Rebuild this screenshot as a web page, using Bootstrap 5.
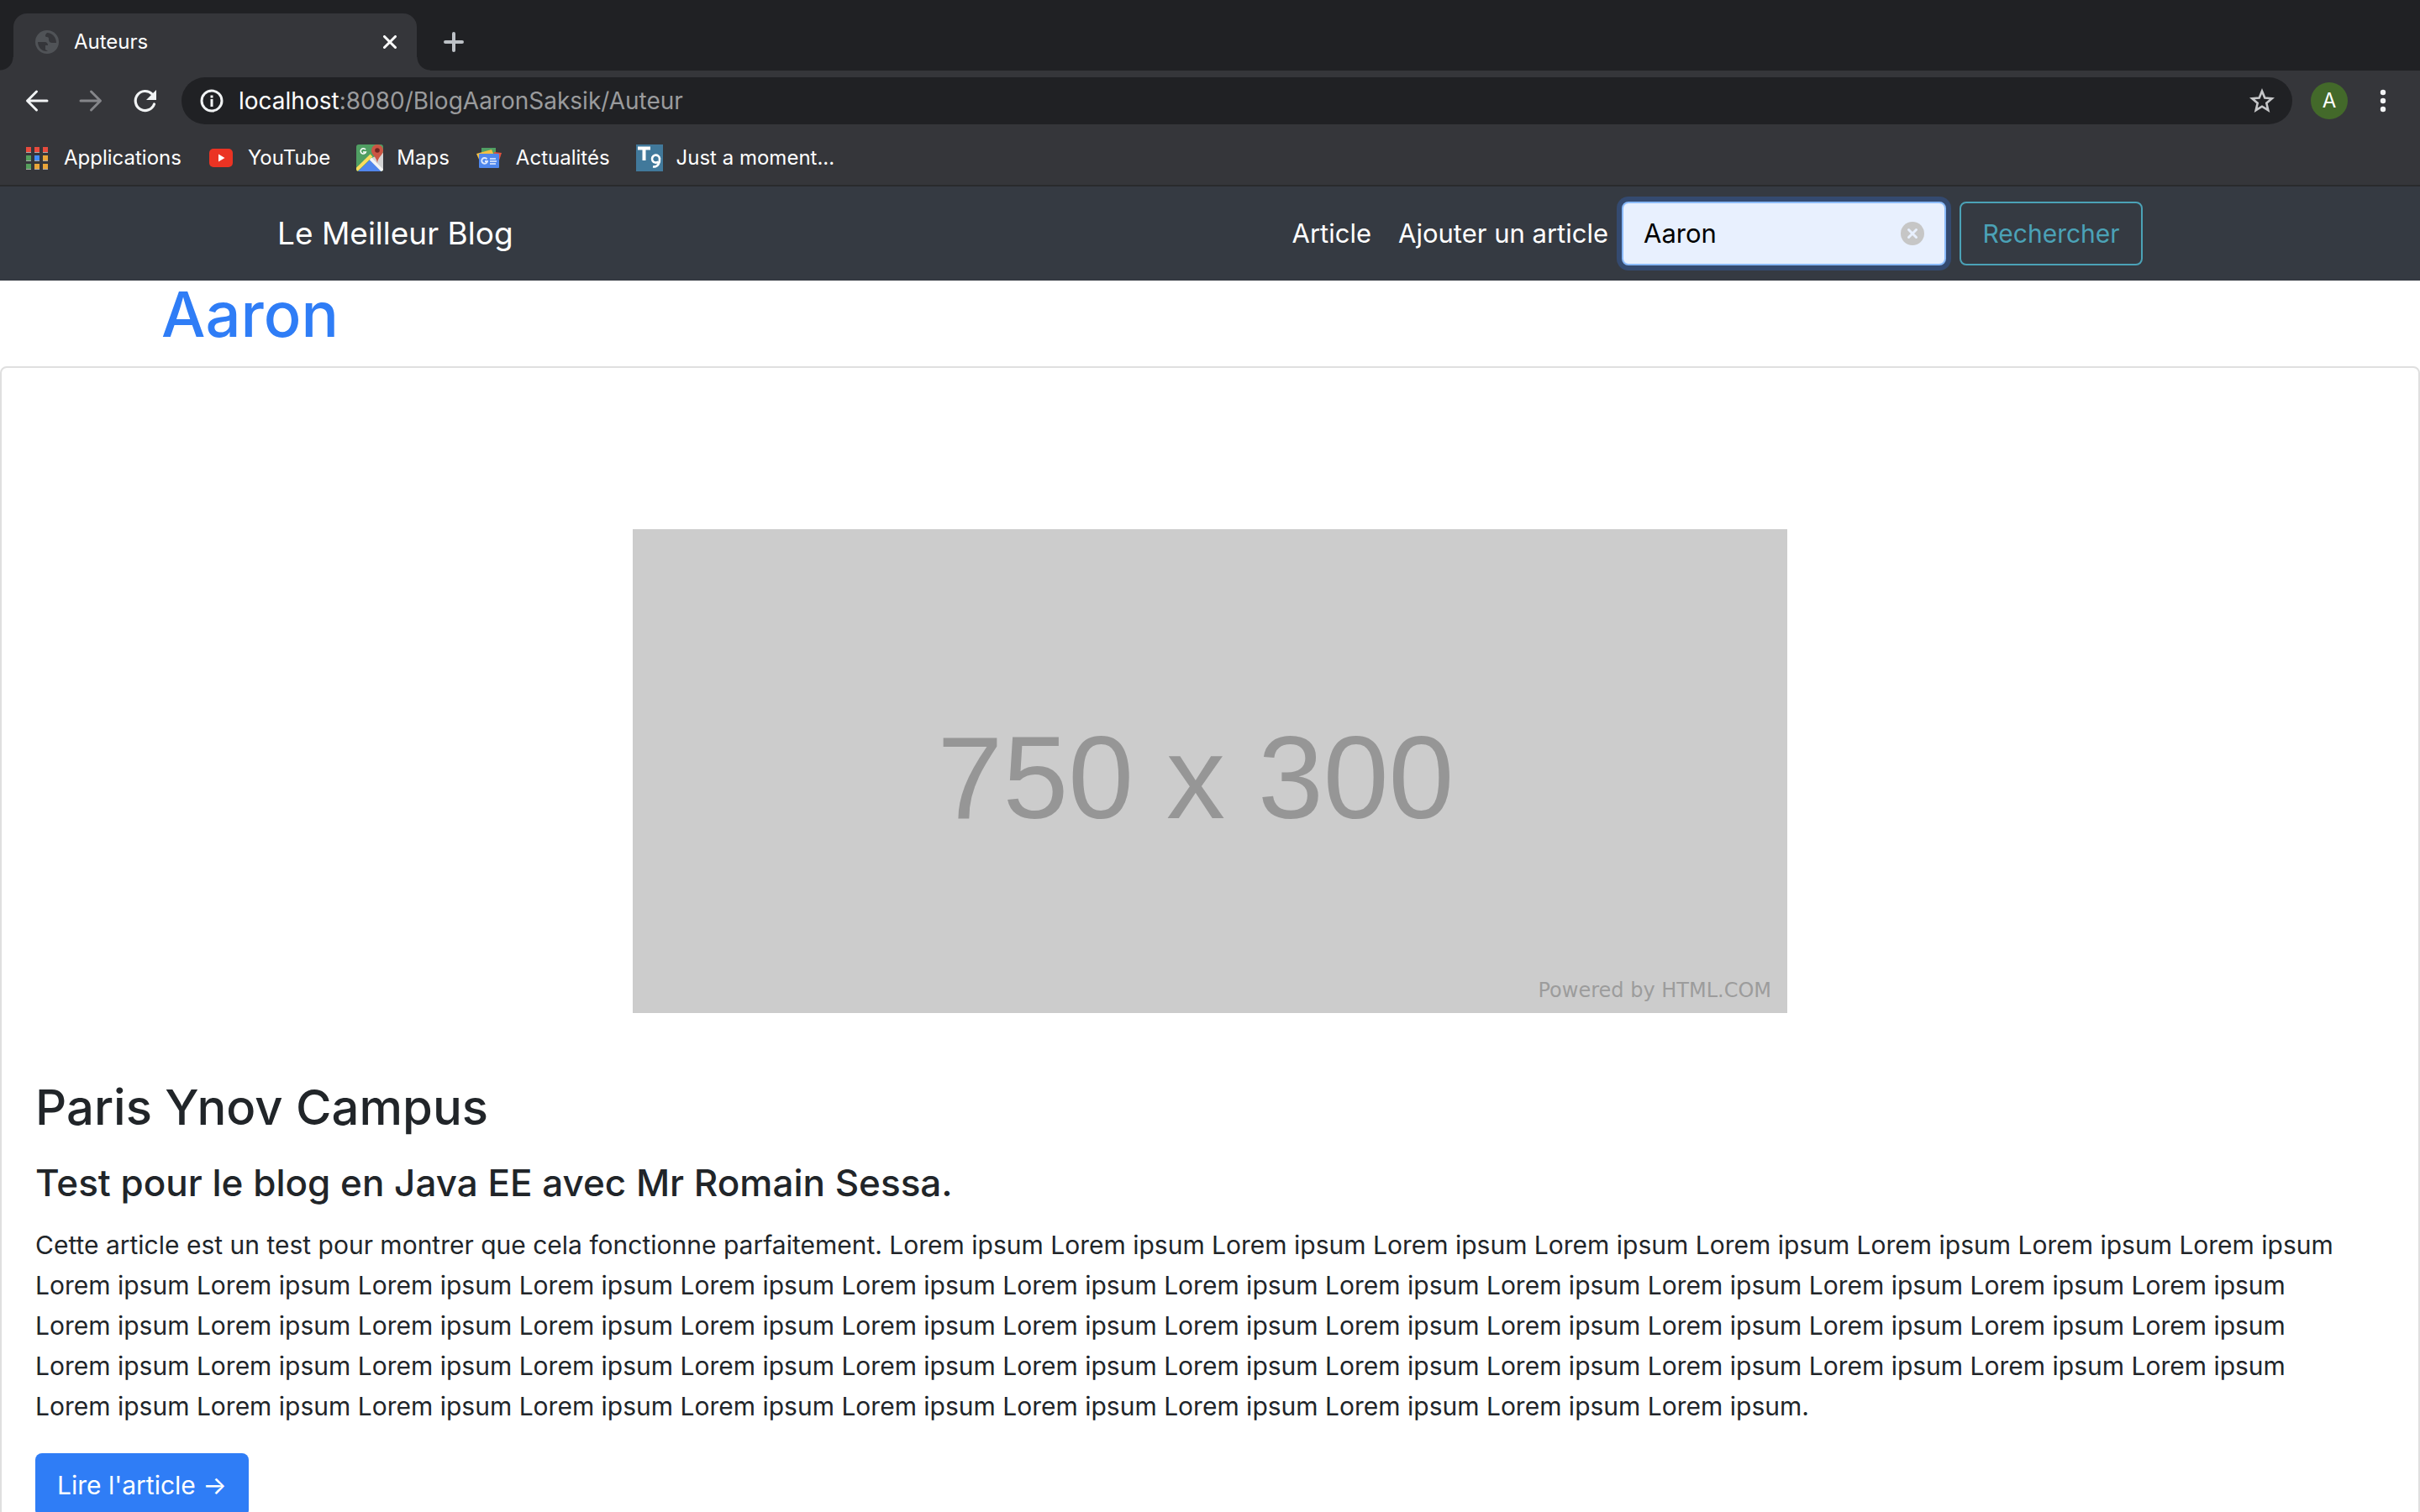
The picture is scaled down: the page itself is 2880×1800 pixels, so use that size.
<!DOCTYPE html>
<html lang="fr">
<head>
<meta charset="utf-8">
<meta name="viewport" content="width=device-width, initial-scale=1">
<title>Auteurs</title>
<link href="https://cdn.jsdelivr.net/npm/bootstrap@5.3.0/dist/css/bootstrap.min.css" rel="stylesheet">
<style>
  body { font-family: Inter, "Liberation Sans", sans-serif; font-size: 30px; line-height: 48px; color: #212529; overflow: hidden; }
  svg { display: block; flex: none; }
  button { color: inherit; }

  /* browser window */
  .tab-strip { background: #202124; height: 84px; padding-top: 16px; font-size: 24px; line-height: 32px; }
  .tab-foot { width: 16px; height: 16px; background: radial-gradient(circle at 0 0, transparent 15px, #35363a 16px); }
  .tab-foot-end { background: radial-gradient(circle at 100% 0, transparent 15px, #35363a 16px); }
  .page-tab { width: 480px; height: 68px; background: #35363a; border-radius: 16px 16px 0 0; padding: 0 24px 0 26px; gap: 18px; }
  .bare { background: none; border: 0; padding: 0; }
  .tool-row { background: #35363a; height: 72px; padding: 0 36px 0 28px; }
  .tool-keys { gap: 32px; }
  .address { background: #202124; border-radius: 28px; height: 56px; padding: 0 20px; margin-left: 28px; font-size: 28px; color: #9a9b9d; }
  .avatar-dot { width: 44px; height: 44px; border-radius: 50%; background: #43692a; font-size: 24px; line-height: 44px; margin-left: 22px; margin-right: 38px; }
  .bookmark-row { background: #35363a; height: 66px; padding: 0 28px; gap: 31px; font-size: 24px; line-height: 32px; border-bottom: 2px solid #292a2c; }
  .bookmark-row a { gap: 16px; }

  /* blog */
  .site-nav { background: #353a42; padding: 16px 0; }
  .site-nav .wrap { max-width: 2280px; padding: 0 30px; width: 100%; margin: 0 auto; height: 80px; }
  .site-name { font-size: 37px; }
  .menu-link { padding: 0 16px; font-size: 31px; }
  .search-field { width: 386px; height: 76px; border: 2px solid #8abafa; border-radius: 8px; background: #e8f0fe; box-shadow: 0 0 0 6px #344a70; padding: 0 24px; margin-right: 16px; }
  .search-field input { min-width: 0; background: none; border: 0; outline: 0; padding: 0; color: #000; font-size: 31px; }
  .search-btn { height: 76px; width: 218px; font-size: 30px; color: #4ba2b7; border: 2px solid #4ba2b7; border-radius: 8px; padding: 0; }
  .author-name { font-size: 74px; line-height: 80px; font-weight: 500; color: #2f7df6; padding: 0 192px; margin: 0 0 22px; }
  .post { border: 2px solid #dfdfdf; border-radius: 8px; }
  .post-pic { width: 1374px; max-width: 100%; height: auto; margin: 192px auto 34px; }
  .post-body { padding: 40px; }
  .post-body h2 { font-size: 58px; line-height: 76px; font-weight: 500; margin-bottom: 24px; }
  .post-body h3 { font-size: 44px; line-height: 56px; font-weight: 500; margin-bottom: 22px; }
  .post-body p { margin-bottom: 32px; }
  .read-btn { background: #2f7df6; color: #fff; font-size: 30px; line-height: 48px; padding: 14px 26px; border: 0; border-radius: 8px; }
</style>
</head>
<body>
<header>
  <div class="tab-strip d-flex">
    <span class="tab-foot align-self-end"></span>
    <div class="page-tab d-flex align-items-center text-white">
      <svg width="28" height="28" viewBox="0 0 28 28"><circle cx="14" cy="14" r="14" fill="#505357"/><path d="M3 14h8c3 0 4 2 4 4h-3v5l3 2C8 26 3 20 3 14zM14 3c-2 2-3 4-1 5 3 0 3 1 3 3 0 3 2 4 4 4h5C25 8 20 3 14 3z" fill="#35363a"/></svg>
      <span class="flex-grow-1">Auteurs</span>
      <button class="bare" aria-label="Fermer l'onglet"><svg width="16" height="16" viewBox="0 0 16 16" stroke="#fff" stroke-width="3" stroke-linecap="round"><path d="M1.500 1.500l13 13M14.500 1.500l-13 13"/></svg></button>
    </div>
    <span class="tab-foot tab-foot-end align-self-end"></span>
    <button class="bare ms-3" aria-label="Nouvel onglet"><svg width="24" height="24" viewBox="0 0 24 24" stroke="#bdc1c6" stroke-width="4" stroke-linecap="round"><path d="M12 2v20M2 12h20"/></svg></button>
  </div>
  <div class="tool-row d-flex align-items-center text-white">
    <div class="tool-keys d-flex">
      <button class="bare" aria-label="Retour"><svg width="32" height="32" viewBox="0 0 32 32" fill="none" stroke="#f1f3f4" stroke-width="3" stroke-linecap="round" stroke-linejoin="round"><path d="M28 16H5M15.500 5L4.500 16l11 11"/></svg></button>
      <button class="bare" aria-label="Avancer"><svg width="32" height="32" viewBox="0 0 32 32" fill="none" stroke="#85868a" stroke-width="3" stroke-linecap="round" stroke-linejoin="round"><path d="M4 16h23M16.500 5l11 11-11 11"/></svg></button>
      <button class="bare" aria-label="Actualiser"><svg width="32" height="32" viewBox="0 0 32 32"><path d="M27.500 20A11.500 11.500 0 1 1 25 8" fill="none" stroke="#f1f3f4" stroke-width="3.200" stroke-linecap="round"/><path d="M30 3v12H18z" fill="#f1f3f4"/></svg></button>
    </div>
    <div class="address d-flex align-items-center flex-grow-1">
      <svg width="32" height="32" viewBox="0 0 32 32"><circle cx="16" cy="16" r="12" fill="none" stroke="#f1f3f4" stroke-width="3"/><path d="M14.500 14h3v9h-3zM14.500 9.500h3v3h-3z" fill="#f1f3f4"/></svg>
      <span class="ms-3 flex-grow-1"><span class="text-white">localhost</span>:8080/BlogAaronSaksik/Auteur</span>
      <button class="bare" aria-label="Ajouter aux favoris"><svg width="32" height="32" viewBox="0 0 32 32" fill="none" stroke="#c6c7c9" stroke-width="2.600"><path d="M16 4.500l3.300 8 8.500.7-6.500 5.600 2 8.400L16 22.700l-7.300 4.500 2-8.400-6.500-5.600 8.500-.7z"/></svg></button>
    </div>
    <span class="avatar-dot text-center">A</span>
    <button class="bare" aria-label="Menu"><svg width="12" height="32" viewBox="0 0 12 32" fill="#f1f3f4"><circle cx="4" cy="6" r="3.200"/><circle cx="4" cy="16" r="3.200"/><circle cx="4" cy="26" r="3.200"/></svg></button>
  </div>
  <nav class="bookmark-row d-flex align-items-center" aria-label="Favoris">
    <a href="#" class="d-flex align-items-center text-white text-decoration-none"><svg width="32" height="32" viewBox="0 0 32 32"><path fill="#a9a9a9" d="M3 7h6v3H3zM13 7h6v3h-6zM23 7h6v3h-6zM3 17h6v3H3zM13 17h6v3h-6zM23 17h6v3h-6zM3 27h6v3H3zM13 27h6v3h-6zM23 27h6v3h-6z"/><path fill="#e84b3d" d="M3 3h6v6H3zM13 3h6v6h-6zM23 3h6v6h-6z"/><path fill="#569e5c" d="M3 13h6v6H3zM3 23h6v6H3z"/><path fill="#438cf5" d="M13 13h6v6h-6z"/><path fill="#e9a539" d="M23 13h6v6h-6zM13 23h6v6h-6zM23 23h6v6h-6z"/></svg>Applications</a>
    <a href="#" class="d-flex align-items-center text-white text-decoration-none"><svg width="32" height="32" viewBox="0 0 32 32"><rect x="2" y="5" width="28" height="22" rx="5" fill="#eb3323"/><path d="M13 11.500v9l7.500-4.500z" fill="#fff"/></svg>YouTube</a>
    <a href="#" class="d-flex align-items-center text-white text-decoration-none"><svg width="32" height="32" viewBox="0 0 32 32"><clipPath id="mapClip"><rect width="32" height="32" rx="3"/></clipPath><g clip-path="url(#mapClip)"><path fill="#509f63" d="M0 0h32v32H0z"/><path fill="#d4d4d4" d="M32 10v22L16 17z"/><path fill="#5186ec" d="M2 32l14.500-14L30 32z"/><path d="M-1 31.500L18 13" stroke="#fbdd5c" stroke-width="4"/><path d="M17 17l15 15" stroke="#f5f5f5" stroke-width="3.500"/><path fill="#cc5544" d="M25 0a7 7 0 0 0-7 7c0 6 6 7 7 15 1-8 7-9 7-15a7 7 0 0 0-7-7z"/><circle cx="25" cy="7" r="2.800" fill="#6f2621"/><path d="M11 6a3.200 3.200 0 1 0 .4 3H8" fill="none" stroke="#fff" stroke-width="1.500"/></g></svg>Maps</a>
    <a href="#" class="d-flex align-items-center text-white text-decoration-none"><svg width="32" height="32" viewBox="0 0 32 32"><path fill="#509f63" d="M7 4h17v8H7z"/><path fill="#e0523f" d="M22 9l9 1-4 12-6-1z"/><path fill="#f4bf42" d="M1 11l18-5 3 7L5 20z"/><rect x="4" y="11" width="24" height="17" rx="1" fill="#4f87ed"/><path d="M13.500 17.500a3.400 3.400 0 1 0 .5 2.500h-3" fill="none" stroke="#dce7fc" stroke-width="2"/><path d="M17 16h7v2h-7zM17 19h8v2h-8zM17 22h7v2h-7z" fill="#c3d6fa"/></svg>Actualités</a>
    <a href="#" class="d-flex align-items-center text-white text-decoration-none"><svg width="32" height="32" viewBox="0 0 32 32"><path fill="#41799b" d="M0 0h32v32H0z"/><path d="M2 4.500h15M9.500 4v15" stroke="#fff" stroke-width="4"/><path d="M28 17a4.500 4.500 0 1 0-1.500 3.500M28 16c.5 6-2 11-8 10.500" fill="none" stroke="#fff" stroke-width="2.600"/></svg>Just a moment...</a>
  </nav>
</header>

<nav class="site-nav">
  <div class="wrap d-flex align-items-center">
    <a href="#" class="site-name text-white text-decoration-none me-auto">Le Meilleur Blog</a>
    <a href="#" class="menu-link text-white text-decoration-none">Article</a>
    <a href="#" class="menu-link text-white text-decoration-none">Ajouter un article</a>
    <form class="d-flex">
      <div class="search-field d-flex align-items-center">
        <input type="text" class="flex-grow-1" value="Aaron" aria-label="Rechercher un auteur">
        <button type="reset" class="bare" aria-label="Effacer"><svg width="28" height="28" viewBox="0 0 28 28"><circle cx="14" cy="14" r="14" fill="#c6c6c6"/><path d="M9.500 9.500l9 9M18.500 9.500l-9 9" stroke="#e8f0fe" stroke-width="3" stroke-linecap="round"/></svg></button>
      </div>
      <button type="submit" class="btn search-btn">Rechercher</button>
    </form>
  </div>
</nav>

<main>
  <h1 class="author-name">Aaron</h1>
  <article class="card post">
    <svg class="post-pic" width="1374" height="576" viewBox="0 0 1374 576" role="img" aria-label="750 x 300">
      <path fill="#ccc" d="M0 0h1374v576H0z"/>
      <text x="670" y="344" text-anchor="middle" font-family="'Liberation Sans', sans-serif" font-size="140" fill="#969696">750 x 300</text>
      <text x="1355" y="557" text-anchor="end" font-family="'DejaVu Sans', sans-serif" font-size="24" fill="#9c9c9c">Powered by HTML.COM</text>
    </svg>
    <div class="card-body post-body">
      <h2>Paris Ynov Campus</h2>
      <h3>Test pour le blog en Java EE avec Mr Romain Sessa.</h3>
      <p>Cette article est un test pour montrer que cela fonctionne parfaitement. Lorem&nbsp;ipsum Lorem&nbsp;ipsum Lorem&nbsp;ipsum Lorem&nbsp;ipsum Lorem&nbsp;ipsum Lorem&nbsp;ipsum Lorem&nbsp;ipsum Lorem&nbsp;ipsum Lorem&nbsp;ipsum
      Lorem&nbsp;ipsum Lorem&nbsp;ipsum Lorem&nbsp;ipsum Lorem&nbsp;ipsum Lorem&nbsp;ipsum Lorem&nbsp;ipsum Lorem&nbsp;ipsum Lorem&nbsp;ipsum Lorem&nbsp;ipsum Lorem&nbsp;ipsum Lorem&nbsp;ipsum Lorem&nbsp;ipsum Lorem&nbsp;ipsum Lorem&nbsp;ipsum
      Lorem&nbsp;ipsum Lorem&nbsp;ipsum Lorem&nbsp;ipsum Lorem&nbsp;ipsum Lorem&nbsp;ipsum Lorem&nbsp;ipsum Lorem&nbsp;ipsum Lorem&nbsp;ipsum Lorem&nbsp;ipsum Lorem&nbsp;ipsum Lorem&nbsp;ipsum Lorem&nbsp;ipsum Lorem&nbsp;ipsum Lorem&nbsp;ipsum
      Lorem&nbsp;ipsum Lorem&nbsp;ipsum Lorem&nbsp;ipsum Lorem&nbsp;ipsum Lorem&nbsp;ipsum Lorem&nbsp;ipsum Lorem&nbsp;ipsum Lorem&nbsp;ipsum Lorem&nbsp;ipsum Lorem&nbsp;ipsum Lorem&nbsp;ipsum Lorem&nbsp;ipsum Lorem&nbsp;ipsum Lorem&nbsp;ipsum
      Lorem&nbsp;ipsum Lorem&nbsp;ipsum Lorem&nbsp;ipsum Lorem&nbsp;ipsum Lorem&nbsp;ipsum Lorem&nbsp;ipsum Lorem&nbsp;ipsum Lorem&nbsp;ipsum Lorem&nbsp;ipsum Lorem&nbsp;ipsum Lorem&nbsp;ipsum.</p>
      <a href="#" class="btn read-btn">Lire l'article →</a>
    </div>
  </article>
</main>
<script src="https://cdn.jsdelivr.net/npm/bootstrap@5.3.0/dist/js/bootstrap.bundle.min.js"></script>
</body>
</html>
